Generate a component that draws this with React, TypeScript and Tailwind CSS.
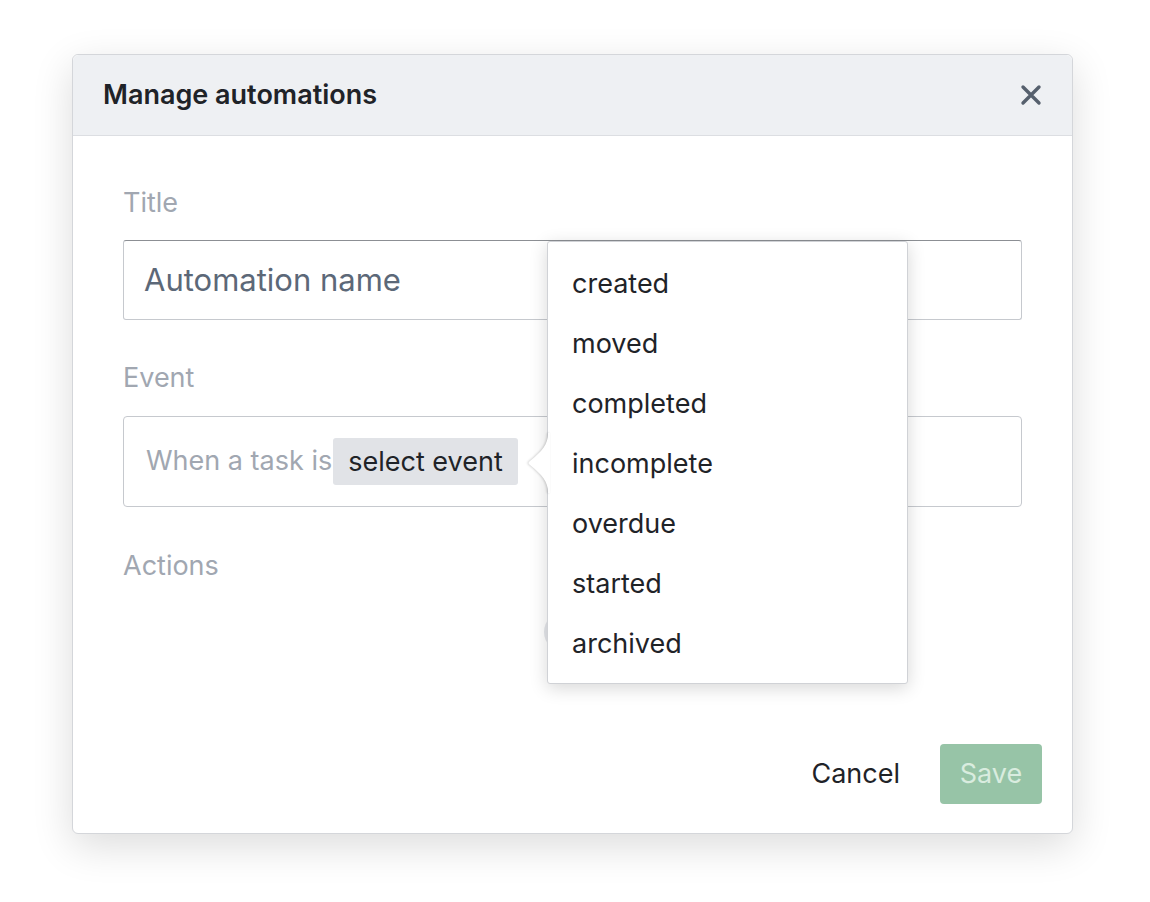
import React from 'react';

const events = ['created', 'moved', 'completed', 'incomplete', 'overdue', 'started', 'archived'];

const font = { fontFamily: 'Inter, "Noto Sans", sans-serif' };

const App: React.FC = () => {
  return (
    <div className="min-h-[902px] w-[1150px] bg-white pl-[72px] pt-[54px]" style={font}>
      <div className="relative flex h-[780px] w-[1001px] flex-col rounded-[6px] border border-[#d4d6da] bg-white shadow-[0_12px_40px_rgba(0,0,0,0.14)]">
        {/* header */}
        <div className="flex h-[81px] items-center justify-between rounded-t-[6px] border-b border-[#dcdee2] bg-[#eef0f3] pl-[30px] pr-[28px]">
          <h1 className="text-[27px] font-semibold text-[#1f2328]">Manage automations</h1>
          <svg width="24" height="24" viewBox="0 0 24 24" className="mr-[1px]">
            <path d="M4 4 L20 20 M20 4 L4 20" stroke="#56606d" strokeWidth="3.4" strokeLinecap="round" />
          </svg>
        </div>

        {/* body */}
        <div className="flex flex-1 flex-col px-[50px] pt-[51px]">
          <label className="text-[27px] leading-[32px] text-[#a1a7b1]">Title</label>
          <div className="mt-[21px] flex h-[80px] items-center rounded-[3px] border border-[#c6c9ce] border-t-[#8c8f94] px-[20px]">
            <span className="text-[31px] text-[#5c6878]">Automation name</span>
          </div>

          <label className="mt-[42px] text-[27px] leading-[32px] text-[#a1a7b1]">Event</label>
          <div className="mt-[22px] flex h-[91px] items-center rounded-[4px] border border-[#c6c9ce] pl-[22px]">
            <span className="text-[27px] text-[#a1a7b1]">When a task is</span>
            <span className="ml-[1px] rounded-[3px] bg-[#e1e3e7] px-[15px] py-[6px] text-[27px] leading-[35px] text-[#1f2328]">select event</span>
          </div>

          <label className="mt-[43px] text-[27px] leading-[32px] text-[#a1a7b1]">Actions</label>
          <div className="mt-[30px] flex justify-center">
            <div className="ml-[-18px] h-[40px] w-[40px] rounded-full bg-[#e4e6ea]" />
          </div>

          <div className="mt-auto mb-[29px] mr-[-20px] flex items-center justify-end gap-[40px]">
            <button className="text-[27px] text-[#1f2328]">Cancel</button>
            <button className="h-[60px] w-[102px] rounded-[4px] bg-[#97c4a7] text-[27px] text-[#d9ecdf]">Save</button>
          </div>
        </div>

        {/* event dropdown */}
        <div className="absolute left-[474px] top-[186px] w-[361px] rounded-[3px] border border-[#d0d2d6] bg-white pb-[9px] pt-[12px] shadow-[0_4px_18px_rgba(0,0,0,0.16)]">
          <svg
            width="26"
            height="60"
            viewBox="0 0 26 60"
            className="absolute left-[-22px] top-[191px]"
            style={{ filter: 'drop-shadow(-1px 0 1px rgba(0,0,0,0.18))' }}
          >
            <path d="M24 0 L22 0 C22 12 16 18 4 28 Q1 30 4 32 C16 42 22 48 22 60 L24 60 Z" fill="white" />
          </svg>
          {events.map((e) => (
            <div key={e} className="flex h-[60px] items-center px-[24px] text-[27px] text-[#1f2328]">
              {e}
            </div>
          ))}
        </div>
      </div>
    </div>
  );
};

export default App;
